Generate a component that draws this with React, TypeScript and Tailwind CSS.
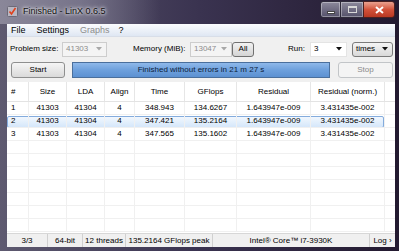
import React from "react";

const cols = [
  { label: "#", w: "w-[22px]", left: true },
  { label: "Size", w: "w-[38px]" },
  { label: "LDA", w: "w-[38px]" },
  { label: "Align", w: "w-[30px]" },
  { label: "Time", w: "w-[50px]" },
  { label: "GFlops", w: "w-[52px]" },
  { label: "Residual", w: "w-[74px]" },
  { label: "Residual (norm.)", w: "w-[74px]" },
];

const rows = [
  ["1", "41303", "41304", "4", "348.943", "134.6267", "1.643947e-009", "3.431435e-002"],
  ["2", "41303", "41304", "4", "347.421", "135.2164", "1.643947e-009", "3.431435e-002"],
  ["3", "41303", "41304", "4", "347.565", "135.1602", "1.643947e-009", "3.431435e-002"],
];

const status = [
  { text: "3/3", w: "w-[41px]" },
  { text: "64-bit", w: "w-[35px]" },
  { text: "12 threads", w: "w-[43px]" },
  { text: "135.2164 GFlops peak", w: "w-[87px]" },
  { text: "Intel® Core™ i7-3930K", w: "w-[157px]" },
  { text: "Log ›", w: "w-[25px]" },
];

function Arrow({ light }: { light?: boolean }) {
  return (
    <svg width="6" height="4" viewBox="0 0 6 4">
      <path d="M0 0h6L3 3.5z" fill={light ? "#a8a8a8" : "#111"} />
    </svg>
  );
}

function Combo({
  value,
  w,
  kind,
}: {
  value: string;
  w: string;
  kind: "disabled" | "plain" | "button";
}) {
  const box =
    kind === "disabled"
      ? "bg-[#f4f4f4] border border-[#cdcdcd] text-[#8c8c8c]"
      : kind === "plain"
        ? "bg-white border border-[#e4e4e4] text-black"
        : "bg-gradient-to-b from-[#f4f4f4] to-[#d9d9d9] border border-[#7a7a7a] rounded-[3px] text-black";
  return (
    <div className={`${w} h-[15px] flex items-center justify-between pl-[3px] pr-[4px] ${box}`}>
      <span>{value}</span>
      <Arrow light={kind === "disabled"} />
    </div>
  );
}

export default function App() {
  return (
    <div className="w-[399px] h-[251px] overflow-hidden flex flex-col bg-gradient-to-r from-[#5e5a70] via-[#3a3350] to-[#231a30] font-['Liberation_Sans',Arial,sans-serif] text-[8px] text-black leading-none">
      {/* title bar */}
      <div className="h-[24px] flex items-start relative">
        <div className="absolute left-0 top-0 w-[160px] h-[24px] bg-gradient-to-r from-[#8a8799] via-[#77748a] to-transparent" />
        <div className="relative flex items-center h-[22px] pl-[7px]">
          <svg width="11" height="11" viewBox="0 0 11 11">
            <rect x="0.5" y="0.5" width="10" height="10" rx="1" fill="#b9b7c2" stroke="#6c6a78" />
            <path d="M2.5 5.5l2 2.5 4-6" stroke="#e0401c" strokeWidth="1.6" fill="none" />
          </svg>
          <span className="ml-[5px] text-[9px] text-[#111] [text-shadow:0_0_5px_#ffffff,0_0_3px_#ffffff]">
            Finished - LinX 0.6.5
          </span>
        </div>
        <div className="relative ml-auto mr-[4px] mt-[1px] flex h-[17px]">
          <div className="w-[21px] h-full border border-[#2e2a3a] rounded-l-[3px] bg-gradient-to-b from-[#8d8a9c] to-[#55516a] shadow-[inset_0_0_0_1px_rgba(255,255,255,0.35)] flex items-center justify-center">
            <div className="w-[8px] h-[3px] bg-white mt-[5px] border border-[#444]" />
          </div>
          <div className="w-[22px] h-full border-y border-[#2e2a3a] bg-gradient-to-b from-[#8d8a9c] to-[#55516a] shadow-[inset_0_0_0_1px_rgba(255,255,255,0.35)] flex items-center justify-center">
            <div className="w-[9px] h-[7px] border border-[#d8d8d8] border-t-2" />
          </div>
          <div className="w-[32px] h-full border border-[#4a2020] rounded-r-[3px] bg-gradient-to-b from-[#e9a190] via-[#d2523a] to-[#b93822] flex items-center justify-center">
            <svg width="9" height="8" viewBox="0 0 9 8">
              <path d="M1 1l7 6M8 1l-7 6" stroke="#fff" strokeWidth="2" />
            </svg>
          </div>
        </div>
      </div>

      {/* client area */}
      <div className="ml-[7px] mr-[4px] h-[223px] bg-[#f0f0f0] flex flex-col">
        {/* menu */}
        <div className="h-[13px] flex items-center gap-[11px] pl-[4px] bg-gradient-to-b from-[#fbfcfe] to-[#dfe7f3] border-b border-[#d8dee8] text-[9px]">
          <span>File</span>
          <span>Settings</span>
          <span className="text-[#8d8d8d]">Graphs</span>
          <span className="-ml-[2px]">?</span>
        </div>

        {/* row 1 */}
        <div className="flex items-center h-[16px] mt-[4px]">
          <span className="ml-[3px] w-[52px]">Problem size:</span>
          <Combo value="41303" w="w-[45px]" kind="disabled" />
          <span className="ml-[26px] w-[57px]">Memory (MiB):</span>
          <Combo value="13047" w="w-[42px]" kind="disabled" />
          <div className="w-[22px] h-[15px] flex items-center justify-center border border-[#707070] rounded-[3px] bg-gradient-to-b from-[#f2f2f2] to-[#d4d4d4]">
            All
          </div>
          <span className="ml-[34px] w-[22px]">Run:</span>
          <Combo value="3" w="w-[37px]" kind="plain" />
          <div className="ml-[5px]">
            <Combo value="times" w="w-[41px]" kind="button" />
          </div>
        </div>

        {/* row 2 */}
        <div className="flex items-center h-[17px] mt-[4px]">
          <div className="ml-[4px] w-[54px] h-[16px] flex items-center justify-center border border-[#8e8f8f] rounded-[3px] bg-gradient-to-b from-[#f5f5f5] to-[#dadada]">
            Start
          </div>
          <div className="ml-[7px] w-[258px] h-[16px] flex items-center justify-center border border-[#4a6f9c] bg-gradient-to-b from-[#8fb9ea] via-[#6ea0dc] to-[#5c91d2] text-[#0c1d3a]">
            Finished without errors in 21 m 27 s
          </div>
          <div className="ml-[8px] w-[55px] h-[16px] flex items-center justify-center border border-[#c2c5c8] rounded-[3px] bg-[#f4f4f4] text-[#8a8a8a]">
            Stop
          </div>
        </div>

        {/* table */}
        <div className="mt-[4px] flex-1 bg-white flex flex-col">
          <div className="h-[20px] flex border-b border-[#e3e3e3]">
            {cols.map((c) => (
              <div
                key={c.label}
                className={`${c.w} h-full flex items-center border-r border-[#e6e6e6] ${c.left ? "pl-[4px]" : "justify-center"}`}
              >
                {c.label}
              </div>
            ))}
            <div className="flex-1" />
          </div>
          <div className="flex-1 overflow-hidden">
            {Array.from({ length: 10 }).map((_, i) => {
              const r = rows[i];
              const sel = i === 1;
              return (
                <div key={i} className="h-[13px] flex relative">
                  {sel && (
                    <div className="absolute left-0 w-[377px] top-[1px] bottom-0 rounded-[2px] border border-[#84acdd] bg-gradient-to-b from-[#f1f7fe] to-[#d5e7fa]" />
                  )}
                  {cols.map((c, j) => (
                    <div
                      key={j}
                      className={`${c.w} h-full flex items-center relative border-b border-r border-[#f0f0f0] ${c.left ? "pl-[4px]" : "justify-center"}`}
                    >
                      {r ? r[j] : ""}
                    </div>
                  ))}
                  <div className="flex-1 border-b border-[#f0f0f0]" />
                </div>
              );
            })}
          </div>
        </div>

        {/* status bar */}
        <div className="h-[14px] flex bg-[#f0f0f0] border-t border-[#d7d7d7]">
          {status.map((s, i) => (
            <div
              key={s.text}
              className={`${s.w} h-full flex items-center justify-center ${i < status.length - 1 ? "border-r border-[#d0d0d0]" : ""}`}
            >
              {s.text}
            </div>
          ))}
        </div>
      </div>
    </div>
  );
}
